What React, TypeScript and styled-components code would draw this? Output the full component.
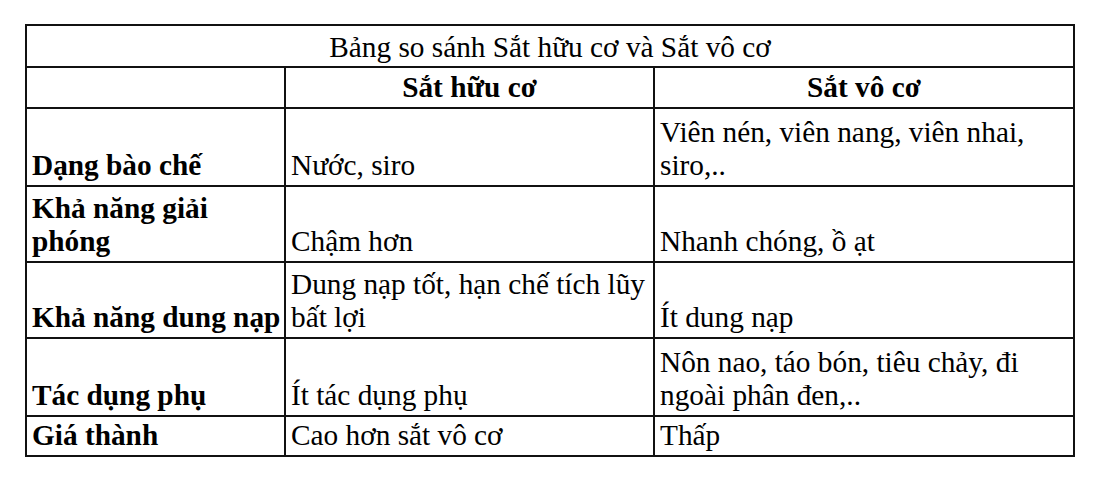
import React from 'react'
import styled, { createGlobalStyle } from 'styled-components'

const GlobalStyle = createGlobalStyle`
  html, body {
    margin: 0;
    padding: 0;
    background: #ffffff;
  }
`

const Page = styled.div`
  width: 1108px;
  height: 490px;
  padding: 24px 0 0 25px;
  box-sizing: border-box;
  background: #fff;
`

const Table = styled.table`
  border-collapse: collapse;
  table-layout: fixed;
  width: 1050px;
  font-family: 'Liberation Serif', 'Times New Roman', serif;
  font-size: 29.3px;
  color: #000;
  border: 2px solid #111;
`

const Row = styled.tr<{ h: number }>`
  height: ${(p) => p.h}px;
`

const Cell = styled.td<{ bold?: boolean; center?: boolean }>`
  border: 2px solid #111;
  padding: 0 ${(p) => (p.bold && !p.center ? 1 : 5)}px 3px 5px;
  vertical-align: bottom;
  line-height: 33px;
  font-weight: ${(p) => (p.bold ? 700 : 400)};
  text-align: ${(p) => (p.center ? 'center' : 'left')};
  overflow: hidden;
`

const TitleCell = styled.td`
  border: 2px solid #111;
  text-align: center;
  vertical-align: bottom;
  line-height: 33px;
  padding: 0 0 2px 0;
`

const rows = [
  { h: 78, label: 'Dạng bào chế', a: 'Nước, siro', b: 'Viên nén, viên nang, viên nhai, siro,..' },
  { h: 76, label: 'Khả năng giải phóng', a: 'Chậm hơn', b: 'Nhanh chóng, ồ ạt' },
  { h: 76, label: 'Khả năng dung nạp', a: 'Dung nạp tốt, hạn chế tích lũy bất lợi', b: 'Ít dung nạp' },
  { h: 78, label: 'Tác dụng phụ', a: 'Ít tác dụng phụ', b: 'Nôn nao, táo bón, tiêu chảy, đi ngoài phân đen,..' },
  { h: 40, label: 'Giá thành', a: 'Cao hơn sắt vô cơ', b: 'Thấp' },
]

export default function App() {
  return (
    <>
      <GlobalStyle />
      <Page>
        <Table>
          <colgroup>
            <col style={{ width: 259 }} />
            <col style={{ width: 369 }} />
            <col style={{ width: 420 }} />
          </colgroup>
          <tbody>
            <Row h={42}>
              <TitleCell colSpan={3}>Bảng so sánh Sắt hữu cơ và Sắt vô cơ</TitleCell>
            </Row>
            <Row h={41}>
              <Cell center />
              <Cell bold center>Sắt hữu cơ</Cell>
              <Cell bold center>Sắt vô cơ</Cell>
            </Row>
            {rows.map((r) => (
              <Row h={r.h} key={r.label}>
                <Cell bold>{r.label}</Cell>
                <Cell>{r.a}</Cell>
                <Cell>{r.b}</Cell>
              </Row>
            ))}
          </tbody>
        </Table>
      </Page>
    </>
  )
}
